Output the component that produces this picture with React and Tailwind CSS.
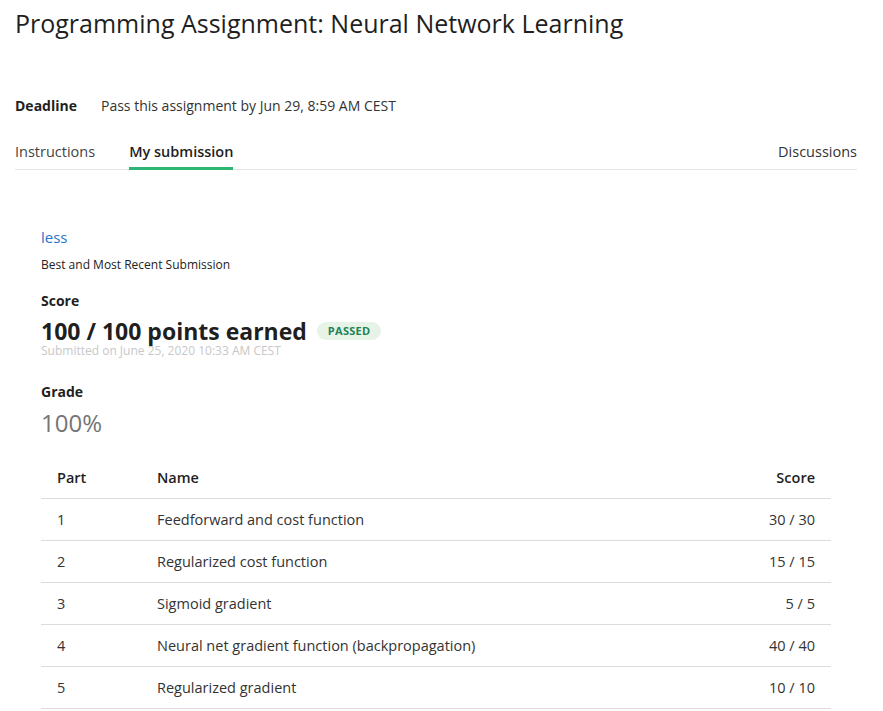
import React from 'react'

const rows = [
  ['1', 'Feedforward and cost function', '30 / 30'],
  ['2', 'Regularized cost function', '15 / 15'],
  ['3', 'Sigmoid gradient', '5 / 5'],
  ['4', 'Neural net gradient function (backpropagation)', '40 / 40'],
  ['5', 'Regularized gradient', '10 / 10'],
]

const App = () => {
  return (
    <div className="bg-white text-[#1f1f1f] w-[883px] h-[711px] overflow-hidden" style={{ fontFamily: '"Open Sans", sans-serif' }}>
      <div className="px-[15px] pt-[6px]">
        <h1 className="text-[25px] leading-[34px] text-[#1f1f1f]">Programming Assignment: Neural Network Learning</h1>
        <div className="flex items-center mt-[56px] text-[14px] leading-[20px]">
          <span className="font-bold w-[86px]">Deadline</span>
          <span className="text-[#333]">Pass this assignment by Jun 29, 8:59 AM CEST</span>
        </div>
        <div className="flex items-end mt-[25px] border-b border-[#e5e5e5] mr-[11px] text-[14.5px]">
          <div className="pb-[6px] text-[#444] mr-[34px]">Instructions</div>
          <div className="pb-[4px] font-semibold border-b-[3px] border-[#2eb573] -mb-[1px]">My submission</div>
          <div className="ml-auto pb-[6px] text-[#333]">Discussions</div>
        </div>
      </div>
      <div className="px-[41px] pt-[56px]">
        <div className="text-[#2a73cc] text-[15px] leading-[22px]">less</div>
        <div className="text-[12px] leading-[16px] mt-[9px] text-[#222]">Best and Most Recent Submission</div>
        <div className="text-[14px] font-bold mt-[18px] leading-[20px]">Score</div>
        <div className="flex items-center gap-[10px] mt-[5px]">
          <span className="text-[23px] font-bold leading-[30px]">100 / 100 points earned</span>
          <span className="bg-[#e8f3e8] text-[#1f8354] text-[11px] font-bold tracking-wide rounded-full px-[11px] py-[1px]">PASSED</span>
        </div>
        <div className="text-[12px] text-[#c8c8c8] leading-[14px] -mt-[2px]">Submitted on June 25, 2020 10:33 AM CEST</div>
        <div className="text-[14px] font-bold mt-[24px] leading-[20px]">Grade</div>
        <div className="text-[24px] text-[#757575] leading-[34px] mt-[4px]">100%</div>
        <table className="w-[790px] mt-[17px] text-[14.5px] border-collapse">
          <thead>
            <tr className="border-b border-[#dcdcdc]">
              <th className="text-left font-semibold h-[42px] w-[116px] pl-[16px]">Part</th>
              <th className="text-left font-semibold">Name</th>
              <th className="text-right font-semibold pr-[16px]">Score</th>
            </tr>
          </thead>
          <tbody>
            {rows.map((r) => (
              <tr key={r[0]} className="border-b border-[#dcdcdc] text-[#333]">
                <td className="h-[42px] pl-[16px]">{r[0]}</td>
                <td>{r[1]}</td>
                <td className="text-right pr-[16px]">{r[2]}</td>
              </tr>
            ))}
          </tbody>
        </table>
      </div>
    </div>
  )
}

export default App
